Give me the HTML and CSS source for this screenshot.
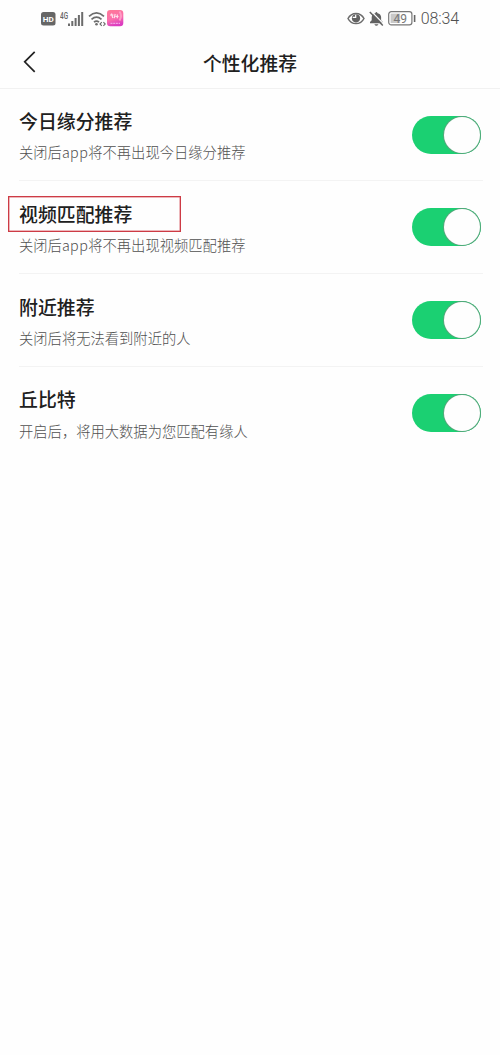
FILE: index.html
```html
<!DOCTYPE html>
<html lang="zh-CN">
<head>
<meta charset="utf-8">
<title>个性化推荐</title>
<link rel="stylesheet" href="styles.css">
</head>
<body>
<div class="status">
  <div class="status-group">
    <svg class="hd" width="15" height="14" viewBox="0 0 15 14"><rect width="14.5" height="13.5" rx="2.5" fill="#666"/><text x="7.3" y="10" text-anchor="middle" class="hd-text" textLength="11" lengthAdjust="spacingAndGlyphs">HD</text></svg>
    <svg class="signal" width="26" height="18" viewBox="0 0 26 18"><text x="0" y="8.5" class="net-text" textLength="8" lengthAdjust="spacingAndGlyphs">4G</text><g fill="#6c6c6c"><rect x="8" y="13.5" width="2" height="2.5"/><rect x="11.3" y="11" width="2" height="5"/><rect x="14.6" y="8" width="2" height="8"/><rect x="17.9" y="5" width="2" height="11"/><rect x="21.2" y="2" width="2" height="14"/></g></svg>
    <svg class="wifi" width="18" height="16" viewBox="0 0 18 16" fill="none" stroke="#6c6c6c" stroke-width="1.7"><path d="M1 5.4Q8.5-1.5 16 5.4M3.5 8.4Q8.5 4 13.5 8.4M6 11.2Q8.5 9 11 11.2"/><circle cx="8.5" cy="13.2" r="1.3" fill="#6c6c6c" stroke="none"/><path d="M13.8 11.2L12 13l1.8 1.8M15.4 11.2l1.8 1.8-1.8 1.8" stroke-width="1.1"/></svg>
    <svg class="app" width="17" height="17" viewBox="0 0 17 17"><defs><linearGradient id="pink" x1="0" y1="0" x2=".3" y2="1"><stop offset="0" stop-color="#ff7896"/><stop offset=".6" stop-color="#fb70ab"/><stop offset="1" stop-color="#dc3dc0"/></linearGradient></defs><rect width="16.3" height="16.3" rx="3.3" fill="url(#pink)"/><path d="M3 5h3.5M4.5 3.5L5.8 8M8.2 4l-1 4.2M8.5 6.5h3M10.3 4.5v3.8" stroke="#ffe1ed" stroke-width="1.2" fill="none"/><path d="M12.5 1.5q3 4 0 9" stroke="#ff9bc5" stroke-width="2" fill="none"/><path d="M3.5 13.4h9.5" stroke="#f3a0e6" stroke-width="1.4" stroke-dasharray="2 .7"/></svg>
  </div>
  <div class="status-group">
    <svg class="eye" width="18" height="13" viewBox="0 0 18 13"><path d="M1 6.5C4.5-.3 13.5-.3 17 6.5 13.5 13.3 4.5 13.3 1 6.5Z" fill="#fff" stroke="#6c6c6c" stroke-width="1.5"/><circle cx="9" cy="6.3" r="4.1" fill="#626262"/><path d="M5.7 5.4h3V2.8" stroke="#fff" stroke-width="1.2" fill="none"/></svg>
    <svg class="bell" width="15" height="16" viewBox="0 0 15 16"><path d="M1 12.3V11l1.7-1.8V6Q3 3 6.2 2.2q1.2-2.2 2.4 0Q11.8 3 12.1 6v3.2l1.7 1.8v1.3ZM5.3 13.2h4.2q-2.1 3.2-4.2 0" fill="#626262"/><path d="M2 0L15 13.4" stroke="#fff" stroke-width="1.3"/><path d="M.8 1L13.8 14.6" stroke="#626262" stroke-width="1.5"/></svg>
    <svg class="battery" width="28" height="15" viewBox="0 0 28 15"><rect x=".7" y=".7" width="23.2" height="13.2" rx="2.6" fill="#fff" stroke="#777" stroke-width="1.2"/><rect x="2.6" y="2.6" width="9.5" height="9.4" fill="#c9c9c9"/><text x="12.3" y="11.5" text-anchor="middle" class="battery-text">49</text><path d="M26.6 4v7" stroke="#666" stroke-width="1.6"/></svg>
    <span class="clock">08:34</span>
  </div>
</div>
<header class="header">
  <svg class="back" width="13" height="22" viewBox="0 0 13 22"><path d="M11.7 .8L1.7 10.8l10 10" fill="none" stroke="#222" stroke-width="1.7"/></svg>
  <h1 class="title">个性化推荐</h1>
</header>
<main class="settings">
  <section class="row">
    <div class="text"><h2 class="name">今日缘分推荐</h2><p class="desc">关闭后<span class="latin">app</span>将不再出现今日缘分推荐</p></div>
    <div class="toggle"><div class="knob"></div></div>
  </section>
  <section class="row">
    <div class="text"><h2 class="name marked">视频匹配推荐</h2><p class="desc">关闭后<span class="latin">app</span>将不再出现视频匹配推荐</p></div>
    <div class="toggle"><div class="knob"></div></div>
  </section>
  <section class="row">
    <div class="text"><h2 class="name">附近推荐</h2><p class="desc">关闭后将无法看到附近的人</p></div>
    <div class="toggle"><div class="knob"></div></div>
  </section>
  <section class="row">
    <div class="text"><h2 class="name">丘比特</h2><p class="desc">开启后，将用大数据为您匹配有缘人</p></div>
    <div class="toggle"><div class="knob"></div></div>
  </section>
</main>
</body>
</html>
```
FILE: styles.css
```css
*, *::after { box-sizing: border-box; }
body {
  margin: 0;
  min-height: 1055px;
  background: #fefefe;
  color: #202020;
  font-family: "Noto Sans CJK SC", sans-serif;
}
h1, h2, p { margin: 0; }
svg { display: block; flex: none; }
.status {
  display: flex;
  justify-content: space-between;
  height: 37px;
  padding: 0 41px 0 41px;
}
.status-group { display: flex; align-items: center; }
.hd-text { font: 700 8px Roboto, sans-serif; fill: #fff; }
.net-text { font: 500 9px Roboto, sans-serif; fill: #666; }
.signal { margin-left: 4px; }
.wifi { margin-left: 2px; }
.app { margin-left: 1px; }
.bell { margin-left: 4px; }
.battery { margin-left: 4px; }
.battery-text { font: 400 12px Roboto, sans-serif; fill: #777; }
.clock {
  margin-left: 5px;
  padding-top: 1px;
  font: 300 16px/20px Roboto, sans-serif;
  color: #505050;
  letter-spacing: -.1px;
}
.header {
  display: grid;
  grid-template-columns: 60px 1fr 60px;
  align-items: center;
  height: 51.6px;
  border-bottom: 1px solid #f1f1f1;
}
.back { margin-left: 23px; }
.title {
  padding-top: 1px;
  text-align: center;
  font-size: 18.8px;
  line-height: 28px;
  font-weight: 500;
}
.settings { padding: 0 17px 0 19px; }
.row {
  display: flex;
  justify-content: space-between;
  align-items: center;
  height: 92.8px;
  border-bottom: 1px solid #f3f3f3;
}
.row:last-child { border-bottom-color: transparent; }
.text { padding-top: 3.4px; }
.name {
  position: relative;
  font-size: 18.9px;
  line-height: 28px;
  font-weight: 500;
}
.marked::after {
  content: "";
  position: absolute;
  left: -11px;
  top: -4px;
  width: 173px;
  height: 36px;
  border: 1px solid #cd3b45;
  box-shadow: inset 0 0 0 .5px #dc7078;
}
.desc {
  margin-top: 4.5px;
  font-size: 14.3px;
  line-height: 26px;
  font-weight: 300;
  color: #505050;
}
.latin { letter-spacing: .4px; }
.toggle {
  display: flex;
  justify-content: flex-end;
  width: 69px;
  height: 38px;
  margin: .4px 2px 0 0;
  padding: 1px;
  border-radius: 19px;
  background: #1bd072;
}
.knob {
  width: 36px;
  height: 36px;
  border-radius: 50%;
  background: #fefefe;
  box-shadow: 0 0 0 1px #55a77b;
}
```
